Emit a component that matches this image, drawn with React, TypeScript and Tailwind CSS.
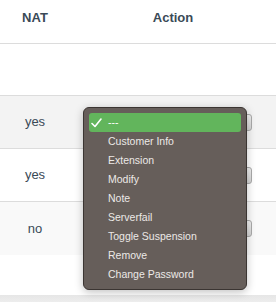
import React from "react";

const rows = [
  { nat: "yes", bg: "bg-[#f3f3f3]" },
  { nat: "yes", bg: "bg-white" },
  { nat: "no", bg: "bg-[#f9f9f9]" },
];

const items = [
  "---",
  "Customer Info",
  "Extension",
  "Modify",
  "Note",
  "Serverfail",
  "Toggle Suspension",
  "Remove",
  "Change Password",
];

function SelectStub() {
  return (
    <div className="relative ml-[24px] h-[17px] w-[158px] rounded-[3px] border border-[#a9a9a9] bg-gradient-to-b from-[#f0f0f0] to-[#d3d3d3]">
      <div className="absolute right-[4px] top-[6px] h-[3px] w-[2px] bg-[#222]" />
    </div>
  );
}

export default function App() {
  return (
    <div
      className="relative h-[302px] w-[276px] overflow-hidden bg-white"
      style={{ fontFamily: '"Liberation Sans", Arial, sans-serif' }}
    >
      <div className="flex h-[44px] border-b border-[#dcdcdc] text-[13px] font-bold text-[#3a4a57]">
        <div className="flex w-[70px] items-center justify-center pb-[7px]">NAT</div>
        <div className="flex flex-1 items-center justify-center pb-[7px]">Action</div>
      </div>
      <div className="h-[52px] border-b border-[#dcdcdc]" />
      {rows.map((r, i) => (
        <div
          key={i}
          className={`flex h-[53px] items-center border-b border-[#dcdcdc] text-[13px] text-[#3a4a57] ${r.bg} ${i === 2 ? "border-b-0" : ""}`}
        >
          <div className="flex w-[70px] justify-center">{r.nat}</div>
          <div className="flex flex-1">
            <SelectStub />
          </div>
        </div>
      ))}
      <div className="h-[40px] bg-white" />
      <div className="h-[12px] bg-gradient-to-b from-[#e6e6e6] to-[#f2f2f2]" />

      <div className="absolute left-[83px] top-[107px] w-[164px] rounded-[6px] border border-[#3b3532] bg-[#665e5a] p-[5px] shadow-[0_2px_8px_rgba(0,0,0,0.25)]">
        {items.map((it, i) => (
          <div
            key={it}
            className={`flex h-[19px] items-center text-[10.5px] text-[#ece9e7] ${
              i === 0 ? "rounded-[3px] bg-[#62b55c] text-white" : ""
            }`}
          >
            <div className="flex w-[14px] justify-end pr-[1px]">
              {i === 0 && (
                <svg width="11" height="10" viewBox="0 0 11 10">
                  <path d="M1 5.5 L4 8.5 L10 1" fill="none" stroke="white" strokeWidth="1.6" strokeLinecap="round" strokeLinejoin="round" />
                </svg>
              )}
            </div>
            <span className="pl-[5px]">{it}</span>
          </div>
        ))}
      </div>
    </div>
  );
}
